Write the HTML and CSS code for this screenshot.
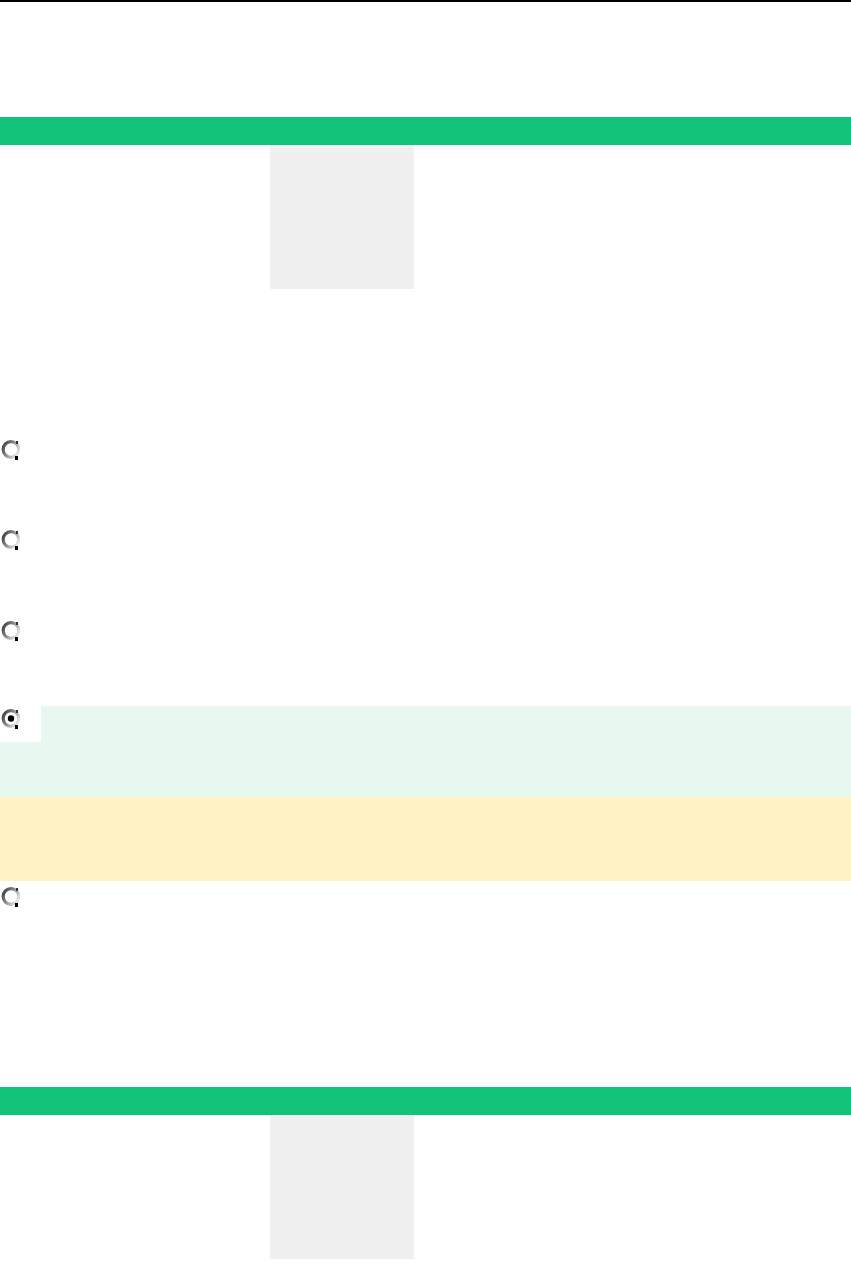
FILE: index.html
```html
<!DOCTYPE html>
<html>
<head>
<meta charset="utf-8">
<link rel="stylesheet" href="styles.css">
</head>
<body>
<div class="topline"></div>
<section class="block first">
  <div class="bar"></div>
  <div class="thumb-row"><div class="thumb"></div></div>
</section>
<div class="options">
  <div class="option o1">
    <svg class="radio" width="21" height="22" viewBox="0 0 21 22"><defs><linearGradient id="g1" x1="0" x2="1" y1="0.2" y2="0.8"><stop offset="0" stop-color="#444"/><stop offset="0.5" stop-color="#999"/><stop offset="1" stop-color="#f0f0f0"/></linearGradient></defs><circle cx="10" cy="10.5" r="7.8" fill="#fff" stroke="url(#g1)" stroke-width="3.2"/><rect x="15" y="2" width="2" height="3" fill="#333"/><rect x="14" y="17" width="3" height="4" fill="#000"/></svg>
  </div>
  <div class="option o2">
    <svg class="radio" width="21" height="22" viewBox="0 0 21 22"><defs><linearGradient id="g2" x1="0" x2="1" y1="0.2" y2="0.8"><stop offset="0" stop-color="#444"/><stop offset="0.5" stop-color="#999"/><stop offset="1" stop-color="#f0f0f0"/></linearGradient></defs><circle cx="10" cy="10.5" r="7.8" fill="#fff" stroke="url(#g2)" stroke-width="3.2"/><rect x="15" y="2" width="2" height="3" fill="#333"/><rect x="14" y="17" width="3" height="4" fill="#000"/></svg>
  </div>
  <div class="option o3">
    <svg class="radio" width="21" height="22" viewBox="0 0 21 22"><defs><linearGradient id="g3" x1="0" x2="1" y1="0.2" y2="0.8"><stop offset="0" stop-color="#444"/><stop offset="0.5" stop-color="#999"/><stop offset="1" stop-color="#f0f0f0"/></linearGradient></defs><circle cx="10" cy="10.5" r="7.8" fill="#fff" stroke="url(#g3)" stroke-width="3.2"/><rect x="15" y="2" width="2" height="3" fill="#333"/><rect x="14" y="17" width="3" height="4" fill="#000"/></svg>
  </div>
  <div class="option selected">
    <div class="sel-head">
      <div class="radio-cell">
        <svg class="radio" width="21" height="22" viewBox="0 0 21 22"><defs><linearGradient id="g4" x1="0" x2="1" y1="0.2" y2="0.8"><stop offset="0" stop-color="#444"/><stop offset="0.5" stop-color="#999"/><stop offset="1" stop-color="#f0f0f0"/></linearGradient></defs><circle cx="10" cy="10.5" r="7.8" fill="#fff" stroke="url(#g4)" stroke-width="3.2"/><circle cx="10" cy="10.5" r="3.2" fill="#000"/><rect x="15" y="2" width="2" height="3" fill="#333"/><rect x="14" y="17" width="3" height="4" fill="#000"/></svg>
      </div>
      <div class="sel-fill"></div>
    </div>
    <div class="sel-body"></div>
    <div class="note"></div>
  </div>
  <div class="option o5">
    <svg class="radio" width="21" height="22" viewBox="0 0 21 22"><defs><linearGradient id="g5" x1="0" x2="1" y1="0.2" y2="0.8"><stop offset="0" stop-color="#444"/><stop offset="0.5" stop-color="#999"/><stop offset="1" stop-color="#f0f0f0"/></linearGradient></defs><circle cx="10" cy="10.5" r="7.8" fill="#fff" stroke="url(#g5)" stroke-width="3.2"/><rect x="15" y="2" width="2" height="3" fill="#333"/><rect x="14" y="17" width="3" height="4" fill="#000"/></svg>
  </div>
</div>
<section class="block second">
  <div class="bar"></div>
  <div class="thumb-row"><div class="thumb"></div></div>
</section>
</body>
</html>
```

FILE: styles.css
```css
html, body {
  margin: 0;
  padding: 0;
  background: #fff;
  font-family: "Liberation Sans", Arial, sans-serif;
}

.topline {
  height: 2px;
  background: #000;
}

.block.first {
  margin-top: 115px;
}

.block.second {
  margin-top: 175px;
}

.bar {
  height: 28px;
  background: #12c278;
}

.thumb-row {
  padding-left: 270px;
}

.thumb {
  width: 144px;
  height: 144px;
  background: #f0f0f0;
}

.options {
  margin-top: 150px;
}

.option {
  display: flex;
  flex-direction: column;
}

.radio {
  display: block;
  margin-left: 1px;
}

.o1 { height: 90px; }
.o2 { height: 91px; }
.o3 { height: 86px; }

.selected {
  display: block;
}

.sel-head {
  display: flex;
  height: 36px;
}

.radio-cell {
  width: 41px;
  background: #fff;
  padding-top: 2px;
  box-sizing: border-box;
}

.sel-fill {
  flex: 1;
  background: #e8f8f1;
}

.sel-body {
  height: 55px;
  background: #e8f8f1;
}

.note {
  height: 84px;
  background: #fff3c4;
}

.o5 {
  padding-top: 5px;
  height: 26px;
}
```
